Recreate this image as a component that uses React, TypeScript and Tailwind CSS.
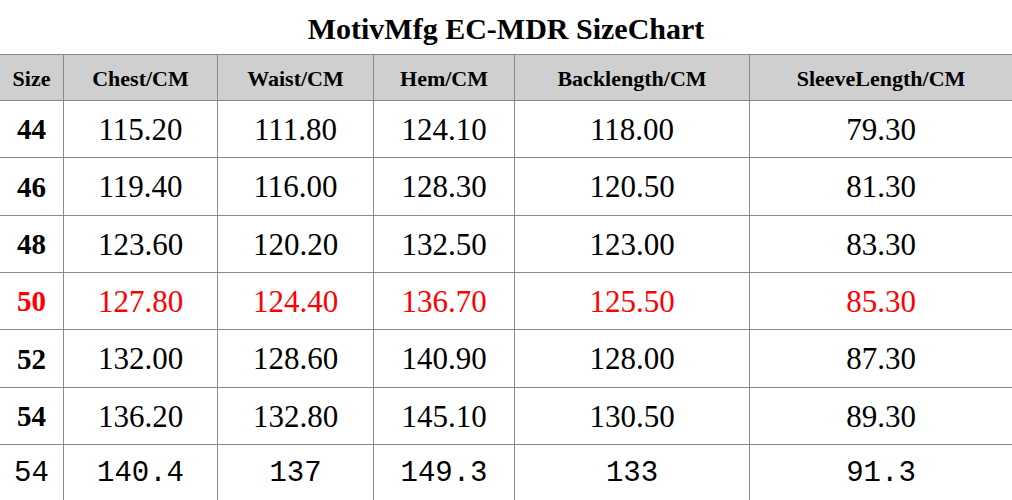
const headers = ["Size", "Chest/CM", "Waist/CM", "Hem/CM", "Backlength/CM", "SleeveLength/CM"];

const rows = [
  ["44", "115.20", "111.80", "124.10", "118.00", "79.30"],
  ["46", "119.40", "116.00", "128.30", "120.50", "81.30"],
  ["48", "123.60", "120.20", "132.50", "123.00", "83.30"],
  ["50", "127.80", "124.40", "136.70", "125.50", "85.30"],
  ["52", "132.00", "128.60", "140.90", "128.00", "87.30"],
  ["54", "136.20", "132.80", "145.10", "130.50", "89.30"],
];

const lastRow = ["54", "140.4", "137", "149.3", "133", "91.3"];

const grid = "grid grid-cols-[64px_154px_156px_141px_235px_1fr]";

export default function App() {
  return (
    <div className="w-[1012px] h-[500px] overflow-hidden bg-white text-black font-['Liberation_Serif','Times_New_Roman',serif]">
      <h1 className="h-[54px] flex items-center justify-center text-[30px] font-bold pt-[2px]">
        MotivMfg EC-MDR SizeChart
      </h1>
      <div className="border-t border-[#8a8a8a]">
        <div className={`${grid} h-[46px] bg-[#d0cfd0]`}>
          {headers.map((h) => (
            <div key={h} className="flex items-center justify-center border-r border-b border-[#8a8a8a] text-[22px] font-bold last:border-r-0 pt-[1px]">
              {h}
            </div>
          ))}
        </div>
        {rows.map((r) => {
          const red = r[0] === "50";
          return (
            <div key={r[0]} className={`${grid} h-[57.33px] ${red ? "text-[#ff0000]" : ""}`}>
              {r.map((v, i) => (
                <div
                  key={i}
                  className={`flex items-center justify-center border-r border-b border-[#8a8a8a] last:border-r-0 pt-[2px] ${
                    i === 0 ? "text-[29px] font-bold" : "text-[31px]"
                  }`}
                >
                  {v}
                </div>
              ))}
            </div>
          );
        })}
        <div className={`${grid} h-[57px] font-['Liberation_Mono',monospace]`}>
          {lastRow.map((v, i) => (
            <div key={i} className="flex items-center justify-center border-r border-[#8a8a8a] last:border-r-0 text-[29px]">
              {v}
            </div>
          ))}
        </div>
      </div>
    </div>
  );
}
